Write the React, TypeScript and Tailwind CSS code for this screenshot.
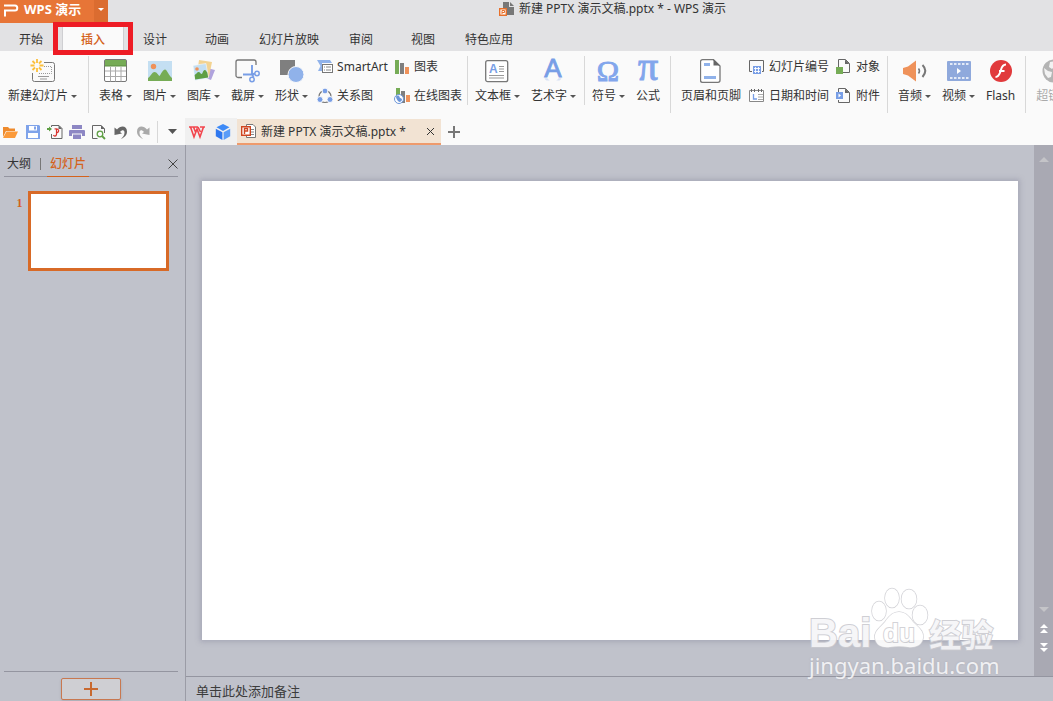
import { useState } from 'react';
import type { ReactNode } from 'react';

const tabs = ['开始', '插入', '设计', '动画', '幻灯片放映', '审阅', '视图', '特色应用'];

const fileName = '新建 PPTX 演示文稿.pptx *';

/* ---------- Small shared pieces ---------- */

function Caret({ className = 'text-[#555]' }: { className?: string }) {
  return (
    <svg viewBox="0 0 6 3" className={`h-[3px] w-[6px] shrink-0 ${className}`} fill="currentColor">
      <path d="M0 0h6L3 3z" />
    </svg>
  );
}

function LargeButton({ label, icon, caret, disabled }: { label: string; icon: ReactNode; caret?: boolean; disabled?: boolean }) {
  return (
    <button type="button" disabled={disabled} className="flex shrink-0 flex-col items-center gap-[5px] disabled:text-[#aaa]">
      <span className="flex h-6 items-center justify-center">{icon}</span>
      <span className="flex items-center gap-[3px] whitespace-nowrap leading-4">
        {label}
        {caret && <Caret />}
      </span>
    </button>
  );
}

function SmallButton({ label, icon }: { label: string; icon: ReactNode }) {
  return (
    <button type="button" className="flex h-4 items-center gap-1 whitespace-nowrap leading-4">
      {icon}
      {label}
    </button>
  );
}

function SmallColumn({ children }: { children: ReactNode }) {
  return <div className="flex shrink-0 flex-col gap-[13px]">{children}</div>;
}

function Divider({ short }: { short?: boolean }) {
  return <div className={short ? 'h-[49px] w-px shrink-0 bg-[#d8d8d8]' : 'h-[57px] w-px shrink-0 bg-[#d8d8d8]'} />;
}

/* ---------- Ribbon icons ---------- */

function NewSlideIcon() {
  return (
    <svg viewBox="0 0 26 24" className="h-6 w-[26px]" fill="none">
      <path d="M14 3.500h8.500a2 2 0 0 1 2 2v15a2 2 0 0 1-2 2h-18a2 2 0 0 1-2-2V14" stroke="#777" />
      <path d="M14 7.500h7.500v7H8" stroke="#999" strokeDasharray="1 1" />
      <path d="M8 17.500h11M10 20h7" stroke="#999" />
      <path d="M7 0v4M7 9v4M0.500 6.500h4M9.500 6.500h4M2.500 2l2.500 2.500M9 8.500l2.500 2.500M11.500 2L9 4.500M5 8.500L2.500 11" stroke="#fbbf3c" strokeWidth="1.800" />
    </svg>
  );
}

function TableIcon() {
  return (
    <svg viewBox="0 0 24 24" className="size-6" fill="none">
      <rect x="0.500" y="0.500" width="22" height="22" rx="1.500" fill="#fff" stroke="#777" />
      <path d="M1 1h21v6H1z" fill="#76ac56" />
      <path d="M0.500 7h22" stroke="#5d8d42" />
      <path d="M1 12h21M1 17.500h21M6.500 8v14.500M11.500 8v14.500M17 8v14.500" stroke="#aaa" />
    </svg>
  );
}

function PictureIcon() {
  return (
    <svg viewBox="0 0 24 20" className="h-5 w-6">
      <path d="M0 0h24v20H0z" fill="#c4dff2" />
      <circle cx="5.500" cy="5.500" r="2.700" fill="#ef925a" />
      <path d="M0 20v-3c2-1 4-6 6.500-6S10 14 11.500 15C13 13 15 8.500 17 8.500S21 15 24 17v3z" fill="#76ac56" />
    </svg>
  );
}

function GalleryIcon() {
  return (
    <svg viewBox="0 0 24 24" className="size-6">
      <path d="M15 9l8 2-4 10-8-3z" fill="#b0a3dd" />
      <path d="M7 1l13 2-3 15-12-3z" fill="#f3d392" />
      <path d="M1 6.500l13-2L16.500 19 3 21.500z" fill="#c4dff2" stroke="#fafafa" strokeWidth="0.600" />
      <path d="M3.200 20.500l-.6-4.500c2-1 2.500-3 4-3s2 2 3 2 1.500-4 3-4 2 2 2.700 2.500l.9 5z" fill="#5f9f45" />
      <circle cx="5" cy="10" r="1.800" fill="#ef925a" />
    </svg>
  );
}

function ScreenshotIcon() {
  return (
    <svg viewBox="0 0 25 24" className="h-6 w-[25px]" fill="none">
      <path d="M7 18.500H3a2 2 0 0 1-2-2V3a2 2 0 0 1 2-2h16a2 2 0 0 1 2 2v3" stroke="#777" strokeWidth="1.300" />
      <path d="M17 6v9l1.500 3M8 15.500h9l3-1" stroke="#789ee6" strokeWidth="1.900" />
      <circle cx="22" cy="14.500" r="2.200" stroke="#789ee6" strokeWidth="1.500" />
      <circle cx="17" cy="20.500" r="2.200" stroke="#789ee6" strokeWidth="1.500" />
    </svg>
  );
}

function ShapesIcon() {
  return (
    <svg viewBox="0 0 24 24" className="size-6">
      <path d="M0 1h15v15H0z" fill="#7f7f7f" />
      <circle cx="16" cy="15.500" r="8" fill="#90b2ea" stroke="#fafafa" />
    </svg>
  );
}

function SmartArtIcon() {
  return (
    <svg viewBox="0 0 16 16" className="size-4" fill="none">
      <path d="M0 1h13l2 3H5v8H1l2.500-5z" fill="#90b2ea" />
      <rect x="5.500" y="5.500" width="10" height="8" fill="#fff" stroke="#777" />
      <path d="M7 8h1M9 8h5M7 11h1M9 11h5" stroke="#888" />
    </svg>
  );
}

function RelationIcon() {
  return (
    <svg viewBox="0 0 16 16" className="size-4" fill="none">
      <circle cx="8" cy="8.500" r="6" stroke="#777" strokeWidth="1.200" />
      <circle cx="8" cy="3" r="2.900" fill="#789ee6" stroke="#fafafa" />
      <circle cx="3" cy="11.500" r="3" fill="#789ee6" stroke="#fafafa" />
      <circle cx="13" cy="11.500" r="3" fill="#789ee6" stroke="#fafafa" />
    </svg>
  );
}

function ChartIcon() {
  return (
    <svg viewBox="0 0 16 16" className="size-4">
      <path d="M1 1h4v14H1z" fill="#76ac56" />
      <path d="M6 4h4v11H6z" fill="#7f7f7f" />
      <path d="M11 8h4v7h-4z" fill="#ef925a" />
    </svg>
  );
}

function OnlineChartIcon() {
  return (
    <svg viewBox="0 0 16 16" className="size-4">
      <path d="M2 0h4v8H2z" fill="#76ac56" />
      <path d="M7 3h4v12H7z" fill="#7f7f7f" />
      <path d="M12 7h4v7h-4z" fill="#ef925a" />
      <circle cx="5" cy="11" r="4.500" fill="#fff" stroke="#6b95d8" />
      <path d="M2 8.500c2-2 3.500-1 3.500.5s2.500 1 2.500 2.500S6.500 14 5.500 14 2 11 2 8.500z" fill="#6b95d8" />
    </svg>
  );
}

function TextBoxIcon() {
  return (
    <svg viewBox="0 0 24 24" className="size-6" fill="none">
      <rect x="0.700" y="1.700" width="22" height="21" rx="2" fill="#fff" stroke="#777" strokeWidth="1.300" />
      <text x="4" y="14" fontSize="12" fontWeight="700" fontFamily="Liberation Sans, sans-serif" fill="#789ee6">A</text>
      <path d="M14 7.500h5M14 10h5M14 12.500h5M4 16.500h15M4 19h15" stroke="#999" />
    </svg>
  );
}

function WordArtIcon() {
  return (
    <svg viewBox="0 0 24 24" className="size-6 overflow-visible">
      <defs>
        <linearGradient id="fade" x1="0" y1="0" x2="0" y2="1">
          <stop offset="0" stopColor="#789ee6" stopOpacity="0.400" />
          <stop offset="1" stopColor="#789ee6" stopOpacity="0" />
        </linearGradient>
      </defs>
      <text x="12" y="18" textAnchor="middle" fontSize="26" fontFamily="Liberation Sans, sans-serif" fill="#789ee6" stroke="#789ee6" strokeWidth="0.800">A</text>
      <path d="M3.500 19.500h3l3 3H6zM17.500 19.500h3l-2.500 3h-3.500z" fill="url(#fade)" />
    </svg>
  );
}

function OmegaIcon() {
  return (
    <svg viewBox="0 0 24 24" className="size-6 overflow-visible">
      <text x="12" y="22" textAnchor="middle" fontSize="30" fontFamily="Liberation Serif, serif" fill="#82a6ec" stroke="#82a6ec" strokeWidth="1">Ω</text>
    </svg>
  );
}

function PiIcon() {
  return (
    <svg viewBox="0 0 24 24" className="size-6 overflow-visible">
      <text x="12" y="21" textAnchor="middle" fontSize="40" fontFamily="Liberation Serif, serif" fill="#82a6ec" stroke="#82a6ec" strokeWidth="1">π</text>
    </svg>
  );
}

function HeaderFooterIcon() {
  return (
    <svg viewBox="0 0 21 24" className="h-6 w-[21px]" fill="none">
      <path d="M13.500 0.700h-11a2 2 0 0 0-2 2V21.300a2 2 0 0 0 2 2h15.500a2 2 0 0 0 2-2V7z" fill="#fff" stroke="#777" strokeWidth="1.300" />
      <path d="M13.500 0.500v6h6.500z" fill="#666" />
      <path d="M4 4h6v3H4zM4 17h12v3H4z" fill="#90b2ea" />
    </svg>
  );
}

function SlideNumberIcon() {
  return (
    <svg viewBox="0 0 16 16" className="size-4" fill="none">
      <path d="M3 12.500H.5v-11h14v11H13" stroke="#666" />
      <path d="M4 7h8v8H4z" fill="#789ee6" />
      <path d="M6.500 8v6M9.500 8v6M5 9.500h6M5 12.500h6" stroke="#fff" strokeWidth="0.900" />
    </svg>
  );
}

function DateIcon() {
  return (
    <svg viewBox="0 0 16 16" className="size-4" fill="none">
      <path d="M.5 2.500h14v11H.5z" fill="#fff" stroke="#888" />
      <path d="M2.500 1v3M5.500 1v3M9.500 1v3M12.500 1v3" stroke="#666" />
      <path d="M9 6.500h5M9 9h5M9 11.500h5" stroke="#aaa" />
      <path d="M4.500 6v5H8" stroke="#789ee6" strokeWidth="1.300" />
    </svg>
  );
}

function ObjectIcon() {
  return (
    <svg viewBox="0 0 16 16" className="size-4" fill="none">
      <path d="M2.500 8V.5h7l4 4v9H7" stroke="#666" />
      <path d="M9 .5V5h4.500z" fill="#666" />
      <path d="M0 8h7v7H0z" fill="#76ac56" />
    </svg>
  );
}

function AttachmentIcon() {
  return (
    <svg viewBox="0 0 16 16" className="size-4" fill="none">
      <path d="M2.500 4V.5h7l4 4v10h-11V12" stroke="#666" />
      <path d="M9 .5V5h4.500z" fill="#666" />
      <path d="M0 4h7v7H0z" fill="#789ee6" />
      <path d="M2.500 5.500v4l2.500-2z" fill="#fff" />
    </svg>
  );
}

function AudioIcon() {
  return (
    <svg viewBox="0 0 24 24" className="size-6" fill="none">
      <path d="M0 9l5-1.500 8-6v21l-8-6L0 15z" fill="#ef925a" />
      <path d="M15.500 9.500c1.200 1.500 1.200 3.500 0 5" stroke="#777" strokeWidth="1.500" />
      <path d="M19.500 6c3.500 3.500 3.500 8 0 12" stroke="#777" strokeWidth="2" />
    </svg>
  );
}

function VideoIcon() {
  return (
    <svg viewBox="0 0 24 20" className="h-5 w-6" fill="none">
      <rect width="24" height="20" rx="1" fill="#8fa9dc" />
      <path d="M3 3h19M3 17h19" stroke="#fff" strokeWidth="1.600" strokeDasharray="2.500 1.500" />
      <path d="M10 7v6l4-3z" fill="#fff" />
    </svg>
  );
}

function FlashIcon() {
  return (
    <svg viewBox="0 0 24 24" className="size-6" fill="none">
      <circle cx="12" cy="12" r="11" fill="#e13a3c" />
      <path d="M17 5.500c-4.500 0-4.500 4-5.500 7s-2 5.500-5 5.500M10 12h5.500" stroke="#fff" strokeWidth="2" />
    </svg>
  );
}

function LinkIcon() {
  return (
    <svg viewBox="0 0 24 24" className="size-6">
      <circle cx="12" cy="12" r="11.500" fill="#b4b4b4" />
      <path d="M8 3l5-1v5l-3 3-3-2zM2 9l4 3 4 1-1 5-3 1-3-4z" fill="#f2f2f2" />
    </svg>
  );
}

/* ---------- Quick access icons ---------- */

function OpenIcon() {
  return (
    <svg viewBox="0 0 16 16" className="size-4">
      <path d="M0 3h5l1.500 1.500H12V7H3l-3 6z" fill="#ee8a2c" />
      <path d="M3.500 7.500H15L12 14H0z" fill="#fb9a3a" />
    </svg>
  );
}

function SaveIcon() {
  return (
    <svg viewBox="0 0 16 16" className="size-4" fill="none">
      <path d="M1 1h13l1 1v13H1z" fill="#7fa3ea" />
      <path d="M4 2h8v4.500H4zM3 9h10v5H3z" fill="#fff" />
      <path d="M9 2.500h2v3H9z" fill="#7fa3ea" />
    </svg>
  );
}

function ExportPdfIcon() {
  return (
    <svg viewBox="0 0 16 16" className="size-4" fill="none">
      <path d="M4.500 3V1.500H12l3 3v10H4.500V10" stroke="#666" />
      <path d="M11.500 1v4H15z" fill="#666" />
      <path d="M0 4h2V2.500L5 5 2 7.500V6H0z" fill="#5f9f45" />
      <path d="M7.500 5c5-1 5.500 3.500 1.500 4M9.500 5.500v5c-.5 2-2.500 2-3 .5" stroke="#d8322f" strokeWidth="1.200" />
    </svg>
  );
}

function PrintIcon() {
  return (
    <svg viewBox="0 0 16 16" className="size-4">
      <path d="M3 1h10v4H3zM1 6h14a1 1 0 0 1 1 1v5h-3V9.500H3V12H0V7a1 1 0 0 1 1-1zM4 10.500h8V15H4z" fill="#8d87c4" />
    </svg>
  );
}

function PreviewIcon() {
  return (
    <svg viewBox="0 0 16 16" className="size-4" fill="none">
      <path d="M6.500 14.500h-5V1.500H10l3.500 3.500v4" stroke="#666" />
      <path d="M10 1v4h4z" fill="#666" />
      <circle cx="9" cy="10" r="2.800" stroke="#5f9f45" strokeWidth="1.300" />
      <path d="M11 12l3 3" stroke="#5f9f45" strokeWidth="1.800" />
    </svg>
  );
}

function UndoIcon({ className }: { className: string }) {
  return (
    <svg viewBox="0 0 16 16" className={`size-4 ${className}`} fill="currentColor">
      <path d="M1.500 3.500L4 5.500C7.500 1 14 1.500 14 7.500c0 4-3 6-6 7.500 2.500-2.500 3.500-4 3.500-6.500 0-3-2.500-3-4.500-.5L9 9.500 1.500 11z" />
    </svg>
  );
}

function CubeIcon() {
  return (
    <svg viewBox="0 0 16 16" className="size-4">
      <path d="M8 0l6.500 3.300L8 7 1.500 3.300z" fill="#3d8af7" />
      <path d="M.8 4.700L7.400 8.300V16L.8 12.200z" fill="#2f78ef" />
      <path d="M15.200 4.700L8.600 8.300V16l6.600-3.800z" fill="#5a9cf8" />
    </svg>
  );
}

function PresentationFileIcon() {
  return (
    <svg viewBox="0 0 16 16" className="size-4 shrink-0" fill="none">
      <path d="M5.500 3V1.500H12l2.500 2.500v10.500h-9V13" fill="#fff" stroke="#777" />
      <path d="M10 6.500h3M10 9h3M10 11.500h3" stroke="#888" />
      <path d="M.7 3.700h8.600v8.600H.7z" fill="#fff" stroke="#cf4520" strokeWidth="1.400" />
      <path d="M3.500 11V5.500h3V8h-3" stroke="#cf4520" strokeWidth="1.400" />
    </svg>
  );
}

function TitleFileIcon() {
  return (
    <svg viewBox="0 0 16 16" className="size-4 shrink-0" fill="none">
      <path d="M4 1h6v5h5v8H4z" fill="#777" />
      <path d="M11 1l4 4h-4z" fill="#777" />
      <path d="M.7 7.700h6.600v6.600H.7z" fill="#fff" stroke="#e8702a" strokeWidth="1.400" />
      <path d="M3 13v-3.500h2.500v2H3" stroke="#e8702a" />
    </svg>
  );
}

/* ---------- Page sections ---------- */

function TitleBar() {
  return (
    <header className="flex h-[23px] shrink-0">
      <button type="button" className="flex w-[94px] shrink-0 items-center gap-[5px] bg-[#e77537] pb-1 pl-[3px] text-[13px] font-bold text-white">
        <svg viewBox="0 0 16 14" className="h-[14px] w-4" fill="none">
          <path d="M1 2.500h11c3 0 3 5 0 5H2v6" stroke="#fff" strokeWidth="2" />
        </svg>
        <span className="whitespace-nowrap">WPS 演示</span>
      </button>
      <button type="button" aria-label="菜单" className="flex w-[14px] shrink-0 items-center justify-center bg-[#db6c30] pb-1">
        <Caret className="text-white" />
      </button>
      <div className="flex flex-1 items-center justify-center gap-1 pb-[5px] pl-16">
        <TitleFileIcon />
        <h1 className="whitespace-nowrap">{fileName} - WPS 演示</h1>
      </div>
    </header>
  );
}

function RibbonTabs() {
  const [active, setActive] = useState('插入');

  return (
    <nav className="flex h-7 shrink-0">
      {tabs.map((tab) => (
        <div key={tab} className="relative flex">
          <button
            type="button"
            onClick={() => setActive(tab)}
            className={`whitespace-nowrap pt-[6px] ${tab.length > 3 ? 'px-[11px]' : 'px-[19px]'} ${
              tab === active ? 'bg-[#fafafa] font-medium text-[#d4621c] shadow-[inset_1px_0_#cfcfd2,inset_-1px_0_#cfcfd2]' : ''
            }`}
          >
            {tab}
          </button>
          {tab === '插入' && (
            <div className="pointer-events-none absolute -inset-x-[9px] -top-px h-[33px] border-[5px] border-[#ee1c25]" />
          )}
        </div>
      ))}
    </nav>
  );
}

function Ribbon() {
  return (
    <section className="flex h-[67px] shrink-0 items-start overflow-hidden bg-[#fafafa] pt-[5px]">
      <div className="flex shrink-0 pt-[3px] pr-[11px] pl-2">
        <LargeButton label="新建幻灯片" icon={<NewSlideIcon />} caret />
      </div>
      <Divider />
      <div className="flex shrink-0 gap-[11px] pt-[3px] pr-[9px] pl-[10px]">
        <LargeButton label="表格" icon={<TableIcon />} caret />
        <LargeButton label="图片" icon={<PictureIcon />} caret />
        <LargeButton label="图库" icon={<GalleryIcon />} caret />
        <LargeButton label="截屏" icon={<ScreenshotIcon />} caret />
        <LargeButton label="形状" icon={<ShapesIcon />} caret />
      </div>
      <div className="flex shrink-0 gap-[6px] pt-[3px] pr-[5px]">
        <SmallColumn>
          <SmallButton label="SmartArt" icon={<SmartArtIcon />} />
          <SmallButton label="关系图" icon={<RelationIcon />} />
        </SmallColumn>
        <SmallColumn>
          <SmallButton label="图表" icon={<ChartIcon />} />
          <SmallButton label="在线图表" icon={<OnlineChartIcon />} />
        </SmallColumn>
      </div>
      <Divider short />
      <div className="flex shrink-0 gap-[11px] pt-[3px] pr-2 pl-[7px]">
        <LargeButton label="文本框" icon={<TextBoxIcon />} caret />
        <LargeButton label="艺术字" icon={<WordArtIcon />} caret />
      </div>
      <Divider short />
      <div className="flex shrink-0 gap-[11px] pt-[3px] pr-[10px] pl-[7px]">
        <LargeButton label="符号" icon={<OmegaIcon />} caret />
        <LargeButton label="公式" icon={<PiIcon />} />
      </div>
      <Divider />
      <div className="flex shrink-0 gap-2 pt-[3px] pr-[7px] pl-[10px]">
        <LargeButton label="页眉和页脚" icon={<HeaderFooterIcon />} />
        <div className="flex gap-[7px]">
          <SmallColumn>
            <SmallButton label="幻灯片编号" icon={<SlideNumberIcon />} />
            <SmallButton label="日期和时间" icon={<DateIcon />} />
          </SmallColumn>
          <SmallColumn>
            <SmallButton label="对象" icon={<ObjectIcon />} />
            <SmallButton label="附件" icon={<AttachmentIcon />} />
          </SmallColumn>
        </div>
      </div>
      <Divider />
      <div className="flex shrink-0 gap-[11px] px-[10px] pt-[3px]">
        <LargeButton label="音频" icon={<AudioIcon />} caret />
        <LargeButton label="视频" icon={<VideoIcon />} caret />
        <LargeButton label="Flash" icon={<FlashIcon />} />
      </div>
      <Divider />
      <div className="flex shrink-0 px-[10px] pt-[3px]">
        <LargeButton label="超链接" icon={<LinkIcon />} disabled />
      </div>
    </section>
  );
}

function DocumentBar() {
  return (
    <section className="flex h-[27px] shrink-0 items-stretch bg-[#fafafa]">
      <div className="flex w-[185px] shrink-0 items-center gap-[6px] pl-[3px]">
        <button type="button" aria-label="打开"><OpenIcon /></button>
        <button type="button" aria-label="保存"><SaveIcon /></button>
        <button type="button" aria-label="输出为PDF"><ExportPdfIcon /></button>
        <button type="button" aria-label="打印"><PrintIcon /></button>
        <button type="button" aria-label="打印预览"><PreviewIcon /></button>
        <button type="button" aria-label="撤消"><UndoIcon className="text-[#666]" /></button>
        <button type="button" aria-label="恢复"><UndoIcon className="-scale-x-100 text-[#aaa]" /></button>
        <div className="h-[22px] w-px bg-[#d8d8d8]" />
        <button type="button" aria-label="自定义" className="pl-1">
          <svg viewBox="0 0 9 5" className="h-[5px] w-[9px]" fill="#555">
            <path d="M0 0h9L4.500 5z" />
          </svg>
        </button>
      </div>
      <div className="flex w-[52px] shrink-0 items-center gap-[10px] bg-[#f0f0f0] pl-1">
        <button type="button" aria-label="WPS">
          <svg viewBox="0 0 16 16" className="size-4" fill="none">
            <path d="M0 3h9M11 3h5M1.500 3l3.500 10 3-8 3 8 3.500-10M4.500 3l2 5M9 3l2.500 5" stroke="#f2444c" strokeWidth="1.600" />
          </svg>
        </button>
        <button type="button" aria-label="文档漫游"><CubeIcon /></button>
      </div>
      <div className="mt-px flex w-[204px] shrink-0 items-center border-b-2 border-[#ee9a6c] bg-[#f2e3d3] pr-[6px] pl-1">
        <PresentationFileIcon />
        <span className="flex-1 whitespace-nowrap pt-[2px] pl-1">{fileName}</span>
        <button type="button" aria-label="关闭">
          <svg viewBox="0 0 9 9" className="size-[9px]" stroke="#333" fill="none">
            <path d="M1 1l7 7M8 1L1 8" />
          </svg>
        </button>
      </div>
      <button type="button" aria-label="新建" className="ml-[7px]">
        <svg viewBox="0 0 12 12" className="size-3" stroke="#777" strokeWidth="2">
          <path d="M6 0v12M0 6h12" />
        </svg>
      </button>
    </section>
  );
}

function SlidePanel() {
  return (
    <aside className="flex w-[186px] shrink-0 flex-col border-r border-[#9b9ca6]">
      <div className="mr-[7px] ml-1 flex h-8 shrink-0 items-stretch border-b border-[#9495a0] pt-[7px]">
        <button type="button" className="px-[3px]">大纲</button>
        <div className="mx-[6px] h-3 w-px self-center bg-[#777]" />
        <button type="button" className="-mb-px border-b border-[#d4621c] px-[3px] font-medium text-[#d4621c]">幻灯片</button>
        <button type="button" aria-label="关闭" className="ml-auto">
          <svg viewBox="0 0 10 10" className="size-[10px]" stroke="#444" fill="none">
            <path d="M.5.5l9 9M9.500.5l-9 9" />
          </svg>
        </button>
      </div>
      <ol className="flex-1 pt-[14px] pl-4">
        <li className="flex gap-[5px]">
          <span className="w-[7px] pt-1 text-center font-['Liberation_Serif','Noto_Sans_CJK_SC',serif] font-bold text-[#d4621c]">1</span>
          <button type="button" aria-label="幻灯片 1" className="h-20 w-[141px] border-[3px] border-[#d86a27] bg-white" />
        </li>
      </ol>
      <div className="mr-[7px] ml-1 flex shrink-0 justify-center border-t border-[#9495a0] pt-[6px] pb-px">
        <button type="button" aria-label="新建幻灯片" className="flex h-[22px] w-[60px] items-center justify-center rounded-xs border border-[#c87850] bg-[#cfcfd3] shadow-sm">
          <svg viewBox="0 0 14 14" className="size-[14px]" stroke="#c8692f" strokeWidth="2">
            <path d="M7 0v14M0 7h14" />
          </svg>
        </button>
      </div>
    </aside>
  );
}

function Workspace() {
  return (
    <main className="flex min-w-0 flex-1 flex-col">
      <div className="flex min-h-0 flex-1">
        <div className="flex-1 px-4 pt-9">
          <div className="aspect-video w-full bg-white shadow-[0_0_5px_2px_rgba(120,120,145,0.35)]" />
        </div>
        <div className="flex w-[19px] shrink-0 flex-col items-center bg-[#a9a9b3] pt-3 pb-6">
          <svg viewBox="0 0 10 5" className="h-[5px] w-[10px]" fill="#c4c4c8">
            <path d="M0 5h10L5 0z" />
          </svg>
          <div className="flex-1" />
          <svg viewBox="0 0 10 5" className="h-[5px] w-[10px]" fill="#c4c4c8">
            <path d="M0 0h10L5 5z" />
          </svg>
          <svg viewBox="0 0 8 9" className="mt-3 h-[9px] w-2" fill="#fff">
            <path d="M0 4h8L4 0zM0 9h8L4 5z" />
          </svg>
          <svg viewBox="0 0 8 9" className="mt-[10px] h-[9px] w-2" fill="#fff">
            <path d="M0 0h8L4 4zM0 5h8L4 9z" />
          </svg>
        </div>
      </div>
      <input
        type="text"
        aria-label="备注"
        placeholder="单击此处添加备注"
        className="h-[25px] shrink-0 border-t border-[#9495a0] bg-transparent pt-1 pl-[10px] text-[13px] outline-none placeholder:text-[#3c3c3c]"
      />
    </main>
  );
}

function Watermark() {
  return (
    <div className="pointer-events-none absolute right-14 bottom-6 w-[188px] text-[#f6f6f8] opacity-90">
      <div className="flex h-16 items-end [paint-order:stroke_fill] [-webkit-text-stroke:2px_#cacad0]">
        <span className="font-['Liberation_Sans',sans-serif] text-[40px] font-bold leading-10">Bai</span>
        <svg viewBox="0 0 58 62" className="mb-1 h-[62px] w-[58px] shrink-0" fill="#fff" stroke="#cfcfd4" strokeWidth="1.500">
          <ellipse cx="8" cy="24" rx="7" ry="9.500" />
          <ellipse cx="21" cy="11" rx="7" ry="9.500" />
          <ellipse cx="38" cy="12" rx="7.500" ry="9.500" />
          <ellipse cx="49" cy="28" rx="7.500" ry="9.500" />
          <path d="M28 25c6 0 10 4 14 10 6 6 11 9 10 16-1 8-9 10-15 9-6-1-12-1-18 0-7 1-14-1-15-9-1-7 5-10 10-16 4-6 8-10 14-10z" />
          <text x="28" y="55" textAnchor="middle" fontSize="26" fontWeight="700" fontFamily="Liberation Sans, sans-serif" strokeWidth="2">du</text>
        </svg>
        <span className="whitespace-nowrap font-['Noto_Sans_CJK_SC',sans-serif] text-[32px] font-bold leading-10">经验</span>
      </div>
      <p className="whitespace-nowrap font-['Noto_Sans',sans-serif] text-[22px] leading-6 [text-shadow:0_0_2px_#aaaab2]">jingyan.baidu.com</p>
    </div>
  );
}

export default function App() {
  return (
    <div className="relative flex h-screen flex-col overflow-hidden bg-[#e2e2e4] font-['Noto_Sans','Noto_Sans_CJK_SC',sans-serif] text-xs text-[#333]">
      <TitleBar />
      <RibbonTabs />
      <Ribbon />
      <DocumentBar />
      <div className="flex min-h-0 flex-1 bg-[#c0c2cb]">
        <SlidePanel />
        <Workspace />
      </div>
      <Watermark />
    </div>
  );
}
